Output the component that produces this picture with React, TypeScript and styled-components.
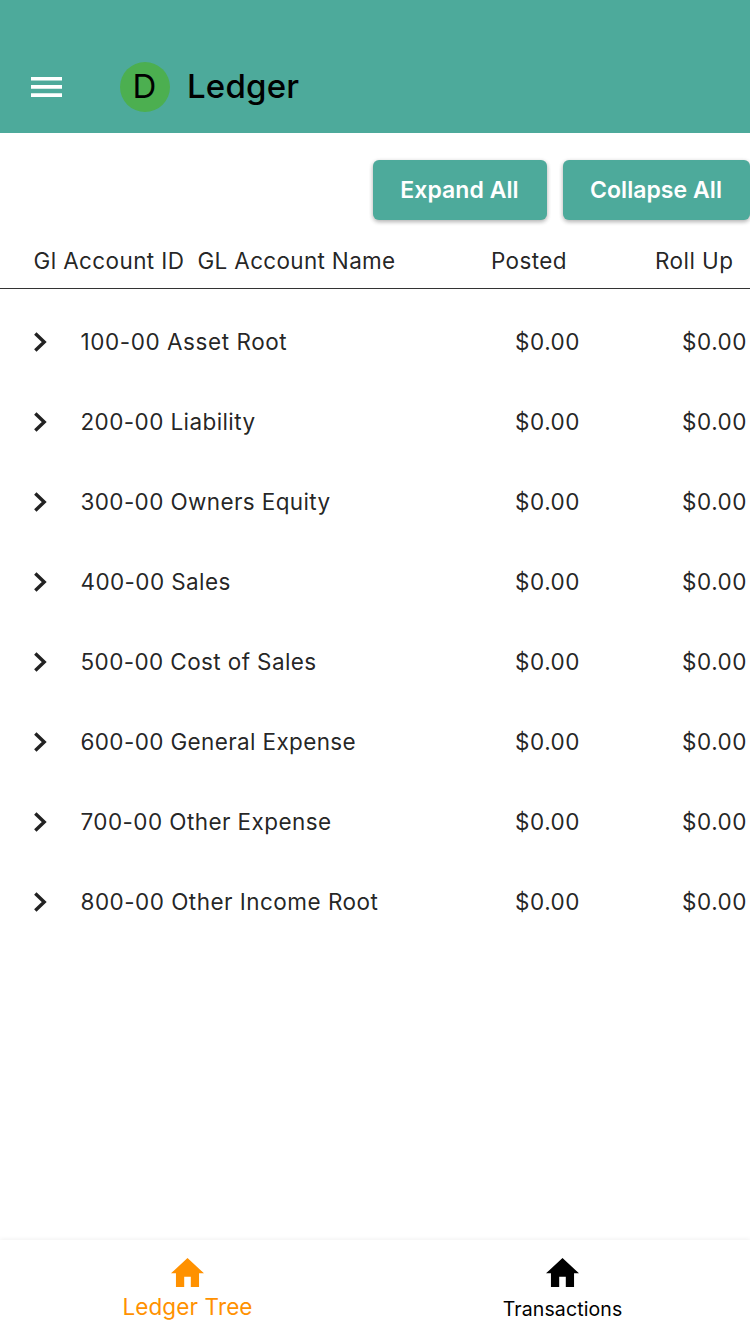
import React from "react";
import styled, { createGlobalStyle } from "styled-components";

const Global = createGlobalStyle`
  * { box-sizing: border-box; }
  body { margin: 0; background: #fff; font-family: Inter, "Liberation Sans", sans-serif; color: rgba(0,0,0,.87); }
`;
const Screen = styled.div`
  display: flex; flex-direction: column; width: 750px; height: 1334px; overflow: hidden; background: #fff;
`;
const AppBar = styled.header`
  flex: none; height: 133px; padding: 40px 0 0 31px; display: flex; align-items: center; background: #4daa9b; color: #000;
`;
const MenuIcon = styled.svg`
  width: 31px; height: 20px; fill: #fff; margin-right: 58px;
`;
const Avatar = styled.div`
  width: 50px; height: 50px; border-radius: 50%; background: #4caf50; font-size: 33px; line-height: 38px; font-weight: 400;
  display: flex; align-items: center; justify-content: center; padding: 0 1px 1px 0;
`;
const Title = styled.h1`
  margin: 0 0 0 17px; padding-bottom: 1px; font-size: 33px; line-height: 39px; font-weight: 500; letter-spacing: 0.2px;
`;
const Actions = styled.div`
  display: flex; gap: 16px; justify-content: flex-end; padding-top: 27px;
`;
const Button = styled.button<{ $width: number }>`
  width: ${(p) => p.$width}px; height: 60px; border: 0; border-radius: 6px; padding: 0 1px 0 0; background: #4daa9b; color: #fff;
  font: 600 23px Inter, sans-serif; letter-spacing: 0.05px; white-space: nowrap;
  box-shadow: 0 2px 4px rgba(0,0,0,.24), 0 1px 5px rgba(0,0,0,.1);
`;
const Row = styled.div<{ $head?: boolean }>`
  display: grid; white-space: pre; align-items: center; font-size: 22.5px; font-weight: 400;
  grid-template-columns: ${(p) => (p.$head ? "164px 293.5px 164px 1fr" : "46.5px 434.5px 167px 1fr")};
  padding-left: ${(p) => (p.$head ? 33.5 : 34)}px;
  height: ${(p) => (p.$head ? 69 : 80)}px;
  ${(p) => p.$head && "padding-top: 14px; border-bottom: 1px solid #333;"}
`;
const Cell = styled.span<{ $tracking: number }>`
  padding-bottom: 2px; letter-spacing: ${(p) => p.$tracking}px;
`;
const Tree = styled.main`
  flex: 1; padding-top: 13px;
`;
const Chevron = styled.svg`
  width: 13px; height: 20px; fill: none; stroke: #222; stroke-width: 3.4;
`;
const NavBar = styled.nav`
  height: 94px; display: grid; grid-template-columns: 1fr 1fr; box-shadow: 0 -1px 4px rgba(0,0,0,.06);
`;
const NavItem = styled.a<{ $active?: boolean }>`
  display: flex; flex-direction: column; align-items: center; padding-top: 18px;
  color: ${(p) => (p.$active ? "#ff9100" : "#000")};
  font-size: ${(p) => (p.$active ? 22.5 : 19.5)}px; letter-spacing: 0.12px;
`;
const HomeIcon = styled.svg`
  width: 33px; height: 29px; fill: currentColor;
`;
const NavLabel = styled.span<{ $active?: boolean }>`
  line-height: 28px; margin-top: ${(p) => (p.$active ? 6 : 8)}px;
`;

const accounts = [
  { name: "100-00 Asset Root", tracking: 0.56 },
  { name: "200-00 Liability", tracking: 0.4 },
  { name: "300-00 Owners Equity", tracking: 0.37 },
  { name: "400-00 Sales", tracking: 0.39 },
  { name: "500-00 Cost of Sales", tracking: 0.39 },
  { name: "600-00 General Expense", tracking: 0.36 },
  { name: "700-00 Other Expense", tracking: 0.42 },
  { name: "800-00 Other Income Root", tracking: 0.47 },
];
const tabs = [{ label: "Ledger Tree", active: true }, { label: "Transactions", active: false }];

export default function App() {
  return (
    <Screen>
      <Global />
      <AppBar>
        <MenuIcon viewBox="0 0 31 20"><path d="M0 0h31v3.6H0zM0 8.1h31v3.6H0zM0 16.2h31v3.8H0z" /></MenuIcon>
        <Avatar>D</Avatar>
        <Title>Ledger</Title>
      </AppBar>
      <Actions>
        <Button $width={174}>Expand All</Button>
        <Button $width={187}>Collapse All</Button>
      </Actions>
      <Row $head>
        <Cell $tracking={0.38}>Gl Account ID</Cell>
        <Cell $tracking={0.32}>GL Account Name</Cell>
        <Cell $tracking={0.36}>Posted</Cell>
        <Cell $tracking={0.44}>Roll Up</Cell>
      </Row>
      <Tree>
        {accounts.map(({ name, tracking }) => (
          <Row key={name}>
            <Chevron viewBox="0 0 13 20"><path d="M1.3 1.5L10.2 10l-8.9 8.5" /></Chevron>
            <Cell $tracking={tracking}>{name}</Cell>
            <Cell $tracking={0.54}>$0.00</Cell>
            <Cell $tracking={0.54}>$0.00</Cell>
          </Row>
        ))}
      </Tree>
      <NavBar>
        {tabs.map((tab) => (
          <NavItem key={tab.label} $active={tab.active}>
            <HomeIcon viewBox="2 3 20 17" preserveAspectRatio="none"><path d="M10 20v-6h4v6h5v-8h3L12 3 2 12h3v8z" /></HomeIcon>
            <NavLabel $active={tab.active}>{tab.label}</NavLabel>
          </NavItem>
        ))}
      </NavBar>
    </Screen>
  );
}
